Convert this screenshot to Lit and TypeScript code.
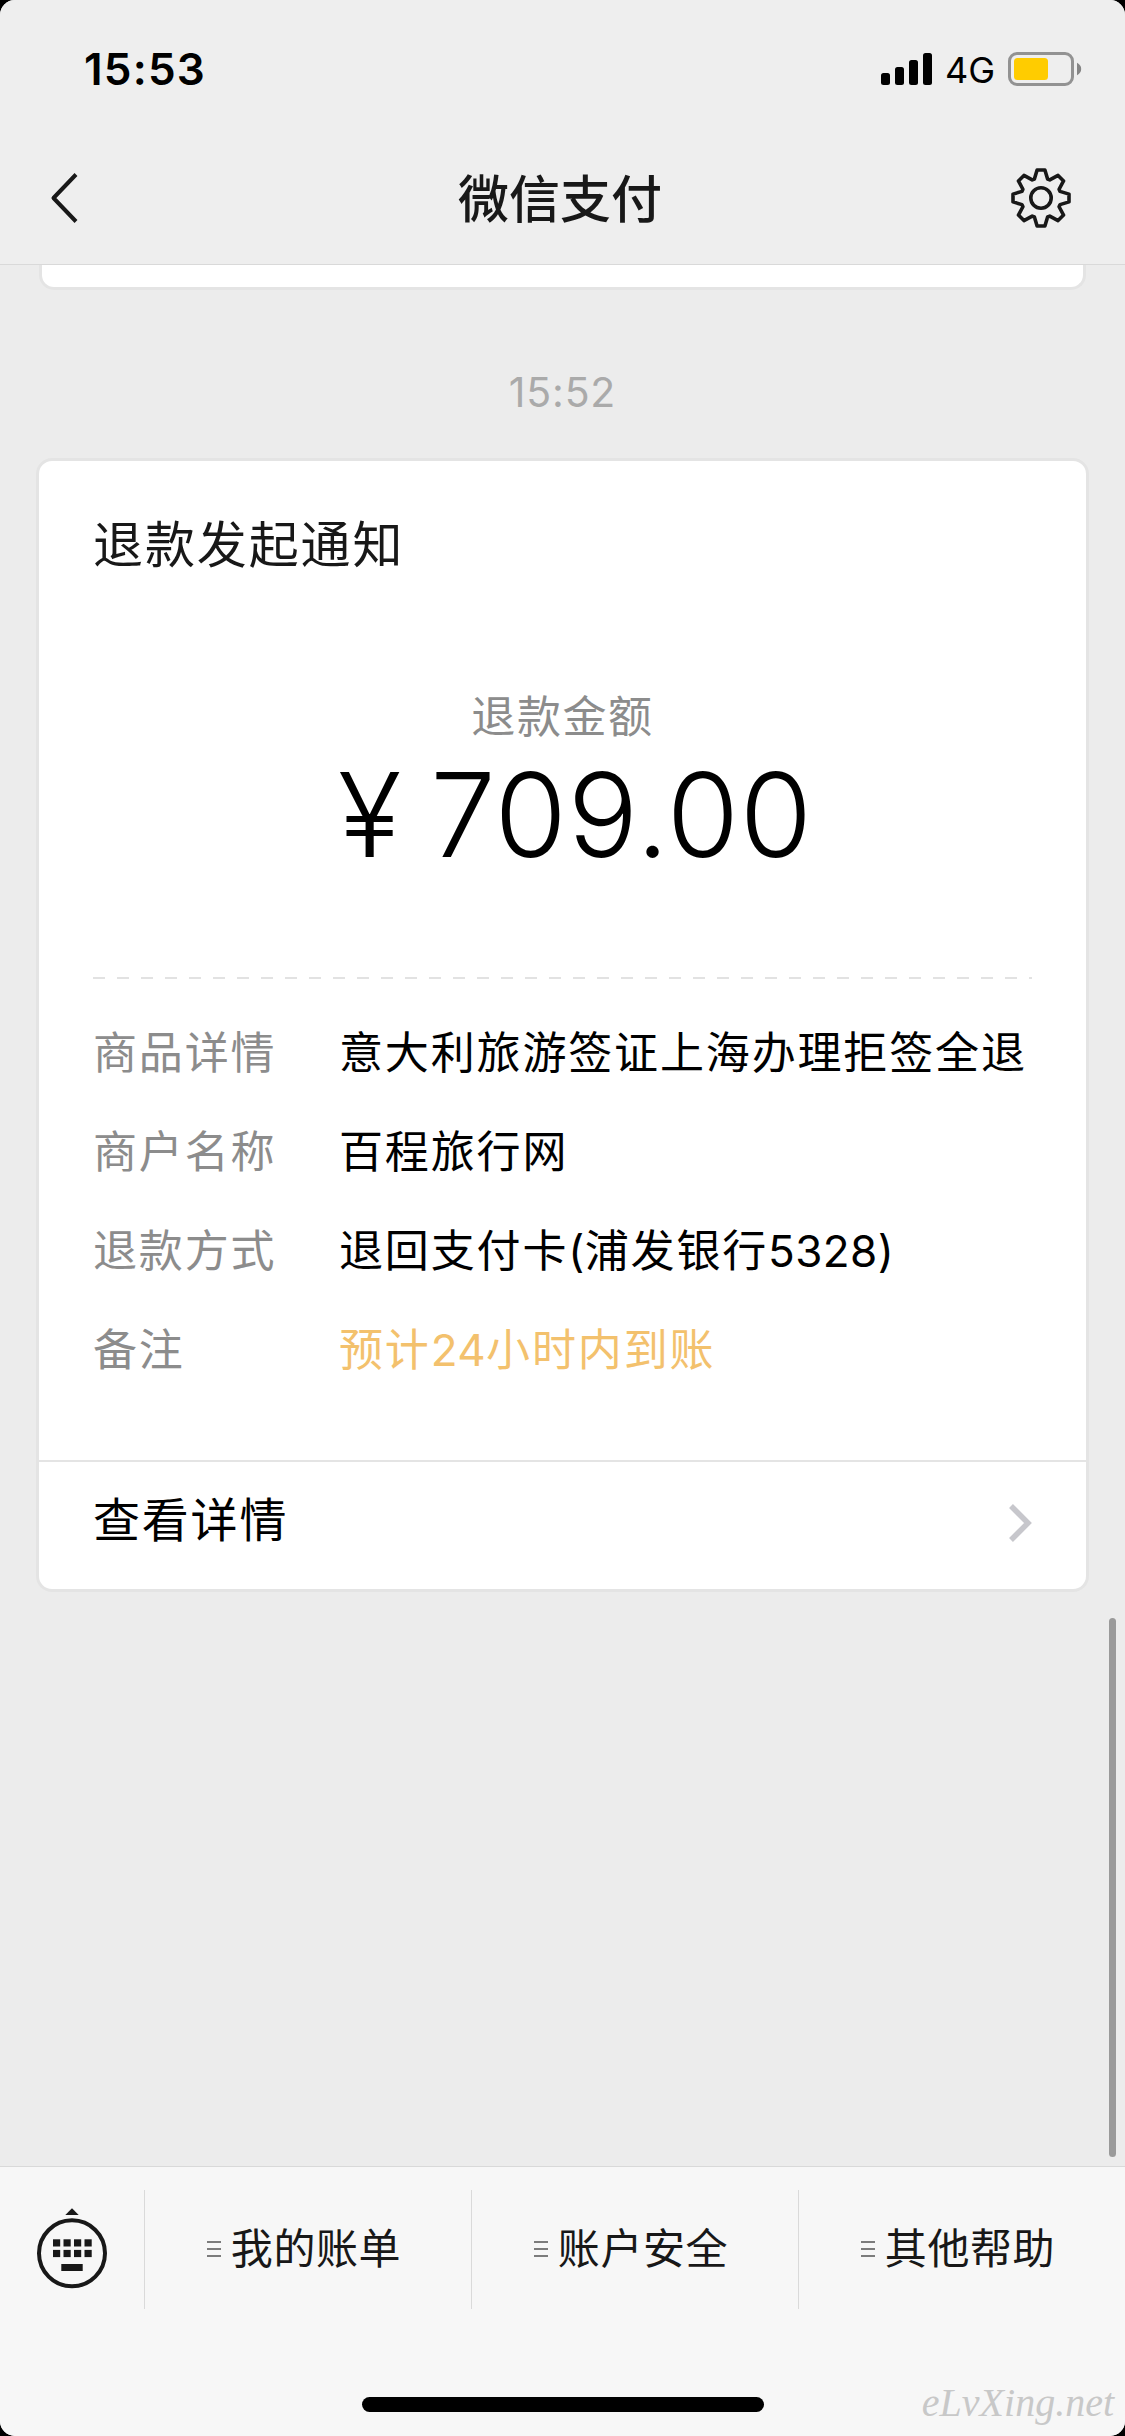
import { LitElement, html, css, svg } from "lit";
import { customElement } from "lit/decorators.js";
import { classMap } from "lit/directives/class-map.js";

interface DetailRow {
  label: string;
  value: string;
  highlight?: boolean;
}

const ROWS: DetailRow[] = [
  { label: "商品详情", value: "意大利旅游签证上海办理拒签全退" },
  { label: "商户名称", value: "百程旅行网" },
  { label: "退款方式", value: "退回支付卡(浦发银行5328)" },
  { label: "备注", value: "预计24小时内到账", highlight: true },
];

const MENU = ["我的账单", "账户安全", "其他帮助"];

/** Outline of the eight-toothed settings gear, centred on the origin. */
function gearPath(): string {
  const tooth = [
    [-6.6, -19],
    [-3.9, -28],
    [3.9, -28],
    [6.6, -19],
  ];
  const points: string[] = [];
  for (let i = 0; i < 8; i++) {
    const a = (i * Math.PI) / 4;
    for (const [x, y] of tooth) {
      const px = x * Math.cos(a) - y * Math.sin(a);
      const py = x * Math.sin(a) + y * Math.cos(a);
      points.push(`${px.toFixed(2)} ${py.toFixed(2)}`);
    }
  }
  return `M${points.join("L")}Z`;
}

/** Digits and brackets are set with less tracking than the Chinese text has. */
function mixedText(value: string) {
  return value
    .split(/([0-9()]+)/)
    .filter((part) => part !== "")
    .map((part) => (/^[0-9()]/.test(part) ? html`<span class="latin">${part}</span>` : part));
}

@customElement("status-bar")
class StatusBar extends LitElement {
  static styles = css`
    :host {
      display: flex;
      height: 132px;
      padding: 6px 43px 0 84px;
      box-sizing: border-box;
      justify-content: space-between;
      align-items: center;
      color: #000;
    }
    .time {
      font-size: 44px;
      font-weight: 600;
      line-height: 60px;
      letter-spacing: 1.2px;
    }
    .right {
      display: flex;
      align-items: center;
    }
    .net {
      font-size: 36px;
      font-weight: 400;
      line-height: 40px;
      margin: 2px 13px 0 13px;
    }
    svg {
      display: block;
    }
  `;
  render() {
    return html`
      <span class="time">15:53</span>
      <div class="right">
        <svg width="51" height="32" viewBox="0 0 51 32">
          <rect x="0" y="20" width="9" height="12" rx="2.5" />
          <rect x="14" y="14" width="9" height="18" rx="2.5" />
          <rect x="28" y="7" width="9" height="25" rx="2.5" />
          <rect x="42" y="0" width="9" height="32" rx="2.5" />
        </svg>
        <span class="net">4G</span>
        <svg width="74" height="34" viewBox="0 0 74 34">
          <rect x="1.5" y="1.5" width="63" height="31" rx="7.5" fill="none" stroke="#929292" stroke-width="3" />
          <rect x="6" y="6" width="34" height="22" rx="3.5" fill="#ffcc00" />
          <path d="M69 10.8Q73.2 13 73.2 17T69 23.2Z" fill="#858585" />
        </svg>
      </div>
    `;
  }
}

@customElement("nav-bar")
class NavBar extends LitElement {
  static styles = css`
    :host {
      display: grid;
      grid-template-columns: 200px 1fr 200px;
      align-items: center;
      height: 132px;
    }
    .title {
      text-align: center;
      font-size: 51px;
      line-height: 72px;
      font-weight: 500;
      color: #181818;
      padding: 4px 5px 0 0;
    }
    .back {
      display: block;
      margin-left: 50px;
    }
    .gear {
      display: block;
      justify-self: end;
      margin-right: 53px;
    }
  `;
  render() {
    return html`
      <svg class="back" width="29" height="52" viewBox="0 0 29 52">
        <path d="M26 2.5L3.5 26L26 49.5" fill="none" stroke="#181818" stroke-width="4" stroke-linejoin="round" />
      </svg>
      <div class="title">微信支付</div>
      <svg class="gear" width="62" height="62" viewBox="-31 -31 62 62">
        <g fill="none" stroke="#181818" stroke-width="3.6" stroke-linejoin="round">
          <path d=${gearPath()} />
          <circle r="10.2" />
        </g>
      </svg>
    `;
  }
}

@customElement("refund-card")
class RefundCard extends LitElement {
  static styles = css`
    :host {
      display: block;
      margin: 0 36px;
      border: 3px solid #e4e4e4;
      border-radius: 16px;
      background: #fff;
    }
    .body {
      height: 1001px;
      box-sizing: border-box;
      padding: 54px 54px 0;
      border-bottom: 2px solid #e4e4e4;
    }
    .title {
      font-size: 50px;
      letter-spacing: 1.9px;
      line-height: 60px;
      color: #181818;
    }
    .caption {
      margin-top: 112px;
      text-align: center;
      font-size: 44px;
      letter-spacing: 1.6px;
      line-height: 60px;
      color: #8c8c8c;
    }
    .amount {
      display: flex;
      justify-content: center;
      gap: 28px;
      margin: 8px 0 0 26px;
      font-size: 117px;
      font-weight: 300;
      line-height: 120px;
      letter-spacing: 0.8px;
      color: #000;
    }
    .dash {
      height: 2px;
      margin-top: 102px;
      background: repeating-linear-gradient(90deg, #e2e2e2 0 12px, transparent 12px 24px);
    }
    .rows {
      padding-top: 25px;
    }
    .row {
      display: grid;
      grid-template-columns: 246px 1fr;
      line-height: 99px;
      font-size: 44px;
      letter-spacing: 1.85px;
      white-space: nowrap;
      color: #000;
    }
    .label {
      color: #8c8c8c;
    }
    .highlight {
      color: #f3c16d;
    }
    .latin {
      letter-spacing: 0.4px;
    }
    .footer {
      display: flex;
      height: 127px;
      align-items: center;
      justify-content: space-between;
      padding: 0 54px;
    }
    .more {
      font-size: 47px;
      letter-spacing: 1.8px;
      line-height: 60px;
      padding-bottom: 11px;
      color: #000;
    }
    .arrow {
      margin-bottom: 5px;
    }
  `;
  render() {
    return html`
      <div class="body">
        <div class="title">退款发起通知</div>
        <div class="caption">退款金额</div>
        <div class="amount"><span>¥</span><span>709.00</span></div>
        <div class="dash"></div>
        <div class="rows">
          ${ROWS.map(
            (r) => html`<div class="row">
              <span class="label">${r.label}</span>
              <span class=${classMap({ value: true, highlight: !!r.highlight })}>${mixedText(r.value)}</span>
            </div>`
          )}
        </div>
      </div>
      <div class="footer">
        <span class="more">查看详情</span>
        <svg class="arrow" width="24" height="40" viewBox="0 0 24 40">
          <path d="M3 3L20 20L3 37" fill="none" stroke="#c7c7cc" stroke-width="5.5" />
        </svg>
      </div>
    `;
  }
}

@customElement("menu-bar")
class MenuBar extends LitElement {
  static styles = css`
    :host {
      display: grid;
      grid-template-columns: 144px repeat(3, 327px);
      height: 119px;
      padding-top: 23px;
    }
    .keyboard {
      display: flex;
      justify-content: center;
      padding-top: 17px;
    }
    .item {
      display: flex;
      align-items: center;
      justify-content: center;
      gap: 10px;
      border-left: 1px solid #dadada;
      padding: 0 8px 0 0;
      font-size: 42px;
      line-height: 60px;
      letter-spacing: 0.6px;
      color: #181818;
    }
    .item svg {
      margin-bottom: 2px;
    }
    .item span {
      padding-bottom: 2px;
    }
    svg {
      display: block;
    }
  `;
  render() {
    const keys = [0, 1, 2, 3].flatMap((c) =>
      [0, 1].map(
        (r) => svg`<rect x=${17 + c * 10.5} y=${32.3 + r * 10.6} width="7.2" height="7.2" />`
      )
    );
    return html`
      <div class="keyboard">
        <svg width="72" height="84" viewBox="0 0 72 84" fill="#181818">
          <path d="M29.3 8L36 1.3L42.7 8Z" />
          <circle cx="36" cy="46.3" r="33" fill="none" stroke="#181818" stroke-width="4" />
          ${keys}
          <rect x="25.3" y="57" width="21.4" height="7" />
        </svg>
      </div>
      ${MENU.map(
        (m) => html`<div class="item">
          <svg width="14" height="16" viewBox="0 0 14 16" fill="#7c7c7c">
            <rect width="14" height="2" />
            <rect y="7" width="14" height="2" />
            <rect y="14" width="14" height="2" />
          </svg>
          <span>${m}</span>
        </div>`
      )}
    `;
  }
}

@customElement("app-root")
class AppRoot extends LitElement {
  static styles = css`
    :host {
      display: block;
      width: 1125px;
      height: 2436px;
      background: #000;
      font-family: Inter, "Noto Sans CJK SC", sans-serif;
    }
    .screen {
      position: relative;
      display: flex;
      flex-direction: column;
      height: 2436px;
      overflow: hidden;
      border-radius: 15px;
      background: #ececec;
    }
    .header {
      background: #eeeeee;
      border-bottom: 1px solid #d9d9d9;
    }
    .chat {
      flex: 1;
    }
    .previous {
      height: 22px;
      margin: 0 39px;
      border: 3px solid #e4e4e4;
      border-top: 0;
      border-radius: 0 0 15px 15px;
      background: #fff;
    }
    .stamp {
      margin: 72px 0 36px;
      text-align: center;
      font-size: 41px;
      line-height: 60px;
      letter-spacing: 0.8px;
      color: #aaa;
    }
    .scrollbar {
      position: absolute;
      top: 1618px;
      right: 9px;
      width: 7px;
      height: 539px;
      border-radius: 4px;
      background: #9a9a9a;
    }
    .bottom {
      height: 269px;
      border-top: 1px solid #d9d9d9;
      background: #f7f7f7;
    }
    .home {
      width: 402px;
      height: 15px;
      margin: 88px auto 0;
      border-radius: 8px;
      background: #000;
    }
    .watermark {
      position: absolute;
      right: 11px;
      bottom: 9px;
      font-family: "Liberation Serif", serif;
      font-style: italic;
      font-size: 40px;
      line-height: 48px;
      color: #c8c8c8;
    }
  `;
  render() {
    return html`
      <div class="screen">
        <div class="header">
          <status-bar></status-bar>
          <nav-bar></nav-bar>
        </div>
        <div class="chat">
          <div class="previous"></div>
          <div class="stamp">15:52</div>
          <refund-card></refund-card>
        </div>
        <div class="bottom">
          <menu-bar></menu-bar>
          <div class="home"></div>
        </div>
        <div class="scrollbar"></div>
        <div class="watermark">eLvXing.net</div>
      </div>
    `;
  }
}
